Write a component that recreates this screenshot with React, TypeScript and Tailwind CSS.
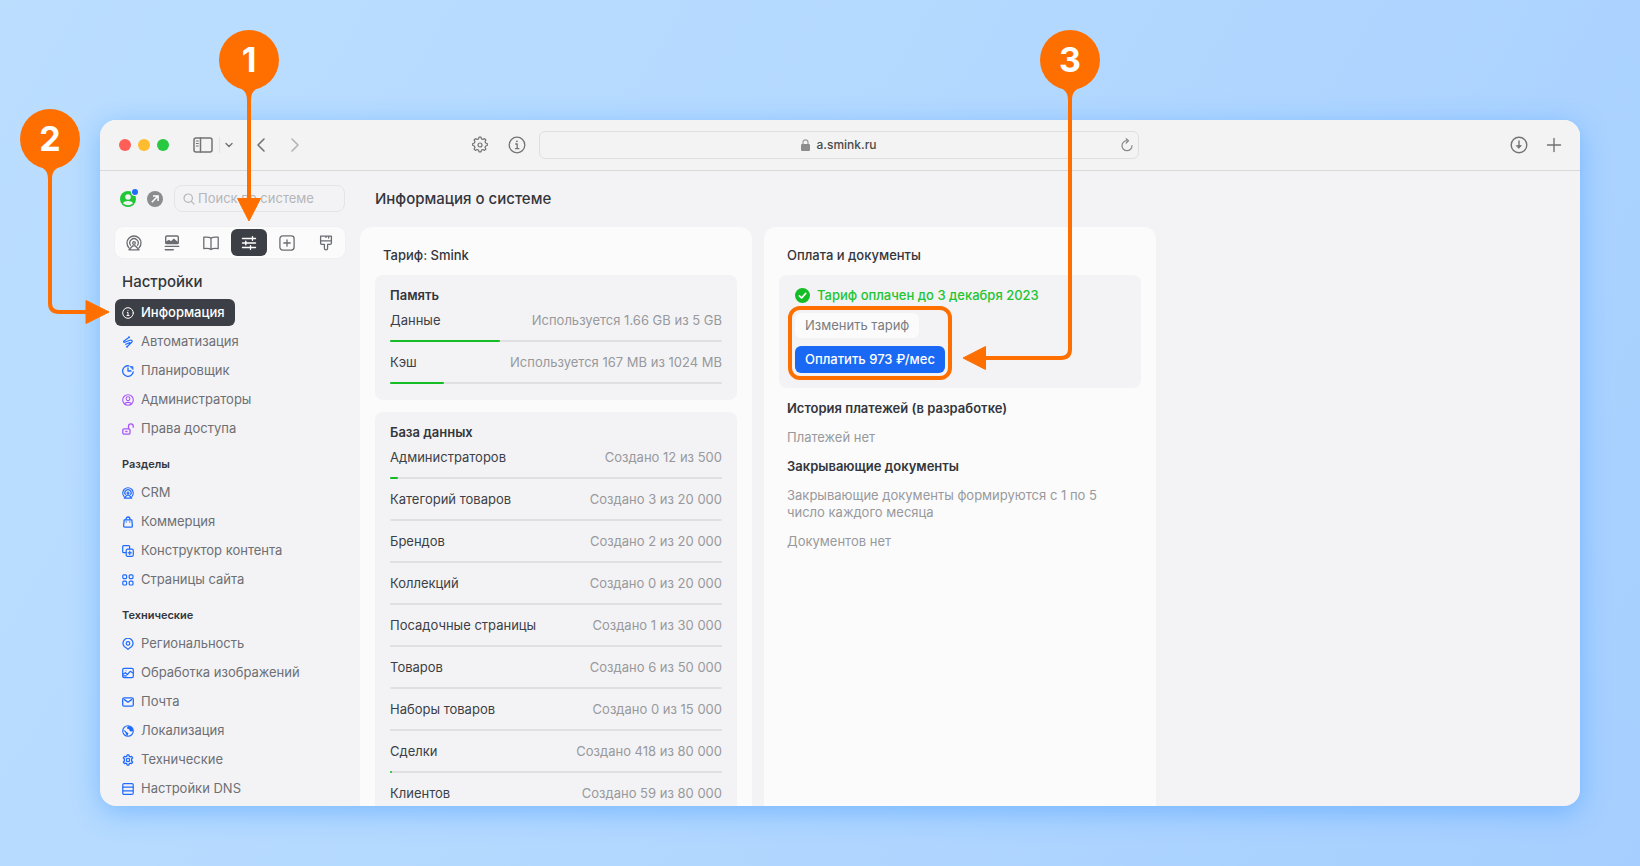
import type { ReactNode } from "react";

const FONT = "font-['Inter','Noto_Sans',sans-serif]";

/* ── Icons ── */

function Icon({ size = 12, box = 12, stroke = 1.2, className = "", children }: {
  size?: number;
  box?: number;
  stroke?: number;
  className?: string;
  children: ReactNode;
}) {
  return (
    <svg
      width={size}
      height={size}
      viewBox={`0 0 ${box} ${box}`}
      fill="none"
      stroke="currentColor"
      strokeWidth={stroke}
      strokeLinecap="round"
      strokeLinejoin="round"
      className={`shrink-0 ${className}`}
      aria-hidden="true"
    >
      {children}
    </svg>
  );
}

const crmShape = (
  <>
    <path d="M2.900 12.800A7 7 0 1 1 13.100 12.800" />
    <path d="M4.500 10.200a4.200 4.200 0 1 1 7 0" />
    <circle cx="8" cy="8" r="1.300" />
    <path d="M3 14.800 6.800 10.800h2.400l3.800 4z" />
  </>
);

const gearShape = (
  <path d="M6.8 1.2h2.4l.5 1.9 1.4.8 1.9-.6 1.2 2-1.4 1.4v2.6l1.4 1.4-1.2 2-1.9-.6-1.4.8-.5 1.9H6.8l-.5-1.9-1.4-.8-1.9.6-1.2-2 1.4-1.4V6.7L1.8 5.3l1.2-2 1.9.6 1.4-.8z" />
);

const icons: Record<string, ReactNode> = {
  info: (
    <Icon stroke={1}>
      <circle cx="6" cy="6" r="5.3" />
      <path d="M5.3 5.4H6v3M5 8.5h2.1" />
      <circle cx="6" cy="3.5" r=".5" fill="currentColor" stroke="none" />
    </Icon>
  ),
  auto: (
    <Icon stroke={1.2}>
      <path d="M6.200 2 2 5c-.8.7-.3 1.700.7 1.300L8 4.200c1.700-.6 3 .8 1.700 2.100L5.800 10M3.600 8.300 8 6.600" />
      <circle cx="7" cy="1.3" r="1" fill="currentColor" stroke="none" />
      <circle cx="5" cy="10.7" r="1" fill="currentColor" stroke="none" />
    </Icon>
  ),
  plan: (
    <Icon stroke={1.3}>
      <path d="M6.8.8A5.3 5.3 0 1 0 11.200 6.800" />
      <path d="M6 3v3h3" />
      <path d="M8.300 1.500 10.800 1.700 11 4.200z" fill="currentColor" stroke="currentColor" strokeWidth=".8" />
    </Icon>
  ),
  admin: (
    <Icon stroke={1.1}>
      <circle cx="6" cy="6" r="5.3" />
      <circle cx="6" cy="4.7" r="1.9" />
      <path d="M2.7 9.6c1-1.7 5.6-1.7 6.6 0" />
    </Icon>
  ),
  access: (
    <Icon stroke={1.3}>
      <rect x=".8" y="5.8" width="7.2" height="5.4" rx="1.3" />
      <path d="M6.5 5.6V3.2a2.3 2.3 0 0 1 4.7 0v1" />
      <path d="M3.8 8.5H5" />
    </Icon>
  ),
  crm: <Icon box={16} stroke={1.5}>{crmShape}</Icon>,
  shop: (
    <Icon stroke={1.3}>
      <path d="M2.2 3.8h7.6l.6 6.2c0 .8-.5 1.2-1.2 1.2H2.8c-.7 0-1.2-.4-1.2-1.2z" />
      <path d="M4 3.6C4 .1 8 .1 8 3.600M4.2 5.800v.2M7.8 5.800v.2" />
    </Icon>
  ),
  builder: (
    <Icon stroke={1.2}>
      <path d="M4 7.6H1.6a.9.9 0 0 1-.9-.9V1.6c0-.5.4-.9.9-.9h5.100c.5 0 .9.400.9.900V4" />
      <rect x="4.2" y="4.2" width="7.1" height="7.1" rx="1.2" />
      <path d="M7.75 6.2v3.2M6.15 7.8h3.2" />
    </Icon>
  ),
  pages: (
    <Icon stroke={1.2}>
      <rect x=".8" y=".8" width="3.8" height="3.8" rx="1" />
      <rect x="7.2" y=".8" width="3.8" height="3.8" rx="1" />
      <rect x=".8" y="7.2" width="3.8" height="3.8" rx="1" />
      <rect x="7.2" y="7.2" width="3.8" height="3.8" rx="1" />
    </Icon>
  ),
  region: (
    <Icon stroke={1.2}>
      <path d="M6 11.400 4.400 10A5 5 0 1 1 7.600 10z" />
      <circle cx="6" cy="5.4" r="1.800" />
    </Icon>
  ),
  images: (
    <Icon stroke={1.2}>
      <rect x=".7" y="1.3" width="10.6" height="9.4" rx="1.4" />
      <path d="m1 7.200 2.400-1.500 2 1.800 2.800-3.200L11 6M1 8.900h3.400" />
      <circle cx="4" cy="3.8" r=".5" fill="currentColor" stroke="none" />
    </Icon>
  ),
  mail: (
    <Icon stroke={1.3}>
      <rect x=".7" y="1.9" width="10.6" height="8.2" rx="1.4" />
      <path d="m2.4 3.6 3.6 2.600 3.600-2.600" />
    </Icon>
  ),
  locale: (
    <Icon stroke={1.1}>
      <circle cx="6" cy="6" r="5.3" />
      <path d="M6.2.9c-1 1-1.6 1.800-.8 2.800.8.8 2 .4 2 1.400 0 .9 1 1.700 2.200 1.400L11.200 6A5.300 5.300 0 0 0 6.200.9zM1 5l2.400.8 1.400 1.400c.6.600 1.600.600 1.600 1.400L5.400 11 4 9.200 3.400 7.600z" fill="currentColor" stroke="none" />
    </Icon>
  ),
  tech: (
    <Icon box={16} stroke={1.7}>
      {gearShape}
      <circle cx="8" cy="8" r="2.3" />
    </Icon>
  ),
  dns: (
    <Icon stroke={1.2}>
      <rect x=".8" y=".6" width="10.4" height="10.8" rx="1.2" />
      <path d="M1 4.200h10M1 7.800h10" />
    </Icon>
  ),
};

const tabs: { label: string; icon: ReactNode }[] = [
  { label: "CRM", icon: <Icon size={16} box={16} stroke={1.3}>{crmShape}</Icon> },
  {
    label: "Контент",
    icon: (
      <Icon size={16} box={16} stroke={1.4}>
        <rect x="1.7" y="1" width="12.6" height="7.6" rx="1.2" />
        <path d="M2 8.400V6.600l3-1.800 2 1.400 2.800-2.600L14 7v1.400z" fill="currentColor" stroke="none" />
        <path d="M1.300 11.400h13.400M1.300 14.700h8" />
      </Icon>
    ),
  },
  {
    label: "Справочник",
    icon: (
      <Icon size={16} box={16} stroke={1.3}>
        <path d="M8 3.200C6.600 1.900 3.600 1.900 .8 2.200v11.400c2.800-.3 5.800-.3 7.200 1 1.400-1.300 4.400-1.300 7.200-1V2.200C12.400 1.900 9.400 1.900 8 3.200zM8 3.200v11.400" />
      </Icon>
    ),
  },
  {
    label: "Настройки",
    icon: (
      <Icon size={16} box={16} stroke={1.4}>
        <path d="M1.500 3.500h13M1.500 8h13M1.500 12.500h13M11.500 1.700v3.600M4.800 6.200v3.600M9.500 10.700v3.600" />
      </Icon>
    ),
  },
  {
    label: "Добавить",
    icon: (
      <Icon size={16} box={16} stroke={1.3}>
        <rect x=".9" y=".9" width="14.2" height="14.2" rx="2.8" />
        <path d="M8 4.800v6.400M4.800 8h6.400" />
      </Icon>
    ),
  },
  {
    label: "Оформление",
    icon: (
      <Icon size={16} box={16} stroke={1.3}>
        <path d="M2.600 1.200h10.800V8c0 .8-.5 1.300-1.300 1.300H9.600v3.900c0 2.200-3.200 2.200-3.200 0V9.300H3.900c-.8 0-1.300-.5-1.300-1.300zM2.600 5.800h10.800M10.600 1.400V3M8 1.400v1" />
      </Icon>
    ),
  },
];

/* ── Data ── */

const navGroups = [
  {
    title: "Настройки",
    items: [
      { icon: "info", label: "Информация", active: true },
      { icon: "auto", label: "Автоматизация" },
      { icon: "plan", label: "Планировщик" },
      { icon: "admin", label: "Администраторы", purple: true },
      { icon: "access", label: "Права доступа", purple: true },
    ],
  },
  {
    title: "Разделы",
    items: [
      { icon: "crm", label: "CRM" },
      { icon: "shop", label: "Коммерция" },
      { icon: "builder", label: "Конструктор контента" },
      { icon: "pages", label: "Страницы сайта" },
    ],
  },
  {
    title: "Технические",
    items: [
      { icon: "region", label: "Региональность" },
      { icon: "images", label: "Обработка изображений" },
      { icon: "mail", label: "Почта" },
      { icon: "locale", label: "Локализация" },
      { icon: "tech", label: "Технические" },
      { icon: "dns", label: "Настройки DNS" },
    ],
  },
] as { title: string; items: { icon: string; label: string; active?: boolean; purple?: boolean }[] }[];

const memory = [
  { label: "Данные", text: "Используется 1.66 GB из 5 GB", part: 1.66 / 5 },
  { label: "Кэш", text: "Используется 167 MB из 1024 MB", part: 167 / 1024 },
];

const database = [
  { label: "Администраторов", text: "Создано 12 из 500", part: 12 / 500 },
  { label: "Категорий товаров", text: "Создано 3 из 20 000", part: 0 },
  { label: "Брендов", text: "Создано 2 из 20 000", part: 0 },
  { label: "Коллекций", text: "Создано 0 из 20 000", part: 0 },
  { label: "Посадочные страницы", text: "Создано 1 из 30 000", part: 0 },
  { label: "Товаров", text: "Создано 6 из 50 000", part: 0 },
  { label: "Наборы товаров", text: "Создано 0 из 15 000", part: 0 },
  { label: "Сделки", text: "Создано 418 из 80 000", part: 418 / 80000 },
  { label: "Клиентов", text: "Создано 59 из 80 000", part: 0 },
];

/* ── Browser toolbar ── */

function Toolbar() {
  return (
    <header className="grid h-[51px] shrink-0 grid-cols-[439px_minmax(0,600px)_1fr] items-center border-b border-[#d9d9dc] bg-[#f3f3f3] pb-px text-[#737373]">
      <div className="flex items-center pl-[19px]">
        <div className="flex gap-[7px]">
          <span className="size-3 rounded-full bg-[#ff5f57]" />
          <span className="size-3 rounded-full bg-[#febc2e]" />
          <span className="size-3 rounded-full bg-[#28c840]" />
        </div>
        <button type="button" aria-label="Боковая панель" className="ml-6">
          <Icon size={20} box={20} stroke={1.5}>
            <rect x="1" y="3" width="18" height="14" rx="2" />
            <path d="M7.500 3v14" />
            <path d="M3.300 6h2M3.300 8.500h2M3.300 11h2" strokeWidth="1" />
          </Icon>
        </button>
        <span className="ml-1.5 h-4 w-px bg-[#e4e4e4]" />
        <button type="button" aria-label="Группы вкладок" className="ml-[5px]">
          <Icon size={8} box={8} stroke={1.4}><path d="m1 2.500 3 3 3-3" /></Icon>
        </button>
        <button type="button" aria-label="Назад" className="ml-5">
          <Icon size={16} box={16} stroke={1.6}><path d="M11 2 5 8l6 6" /></Icon>
        </button>
        <button type="button" aria-label="Вперёд" className="ml-[18px] text-[#b3b3b3]">
          <Icon size={16} box={16} stroke={1.6}><path d="m5 2 6 6-6 6" /></Icon>
        </button>
        <button type="button" aria-label="Параметры" className="ml-auto">
          <Icon size={18} box={18} stroke={1.2}>
            <path d="M8 1.200h2l.5 1.700 1.400.6 1.600-.9 1.400 1.400-.9 1.600.6 1.400 1.700.5v2l-1.700.5-.6 1.400.9 1.600-1.400 1.400-1.600-.9-1.400.6-.5 1.700H8l-.5-1.700-1.400-.6-1.600.9L3.100 13l.9-1.600-.6-1.400-1.700-.5v-2L3.400 7 4 5.600 3.100 4l1.400-1.400 1.600.9 1.400-.6z" />
            <circle cx="9" cy="9" r="2" />
          </Icon>
        </button>
        <button type="button" aria-label="Сведения" className="ml-[19px] mr-[13px]">
          <Icon size={18} box={18} stroke={1.3}>
            <circle cx="9" cy="9" r="7.8" />
            <path d="M7.700 8H9.200v4.500M7.500 12.700h3.400" />
            <circle cx="8.9" cy="5.3" r=".9" fill="currentColor" stroke="none" />
          </Icon>
        </button>
      </div>

      <div className="relative flex h-7 items-center justify-center gap-1.5 rounded-md border border-[#dfdfdf] text-[12px] font-medium text-[#4a4a4a]">
        <svg width="9" height="12" viewBox="0 0 9 12" aria-hidden="true">
          <path d="M2 5.500V3.300a2.500 2.500 0 0 1 5 0v2.200" fill="none" stroke="#999" strokeWidth="1.2" />
          <rect y="5" width="9" height="7" rx="1.3" fill="#8c8c8c" />
        </svg>
        <span>a.smink.ru</span>
        <button type="button" aria-label="Обновить" className="absolute right-1 text-[#888]">
          <Icon size={14} box={14} stroke={1.2}>
            <path d="M7 2.700A5 5 0 1 0 12 7.700" />
            <path d="M6.200.7 8.500 2.800 6.200 5" />
          </Icon>
        </button>
      </div>

      <div className="flex items-center justify-end gap-[18px] pr-[18px]">
        <button type="button" aria-label="Загрузки">
          <Icon size={18} box={18} stroke={1.4}>
            <circle cx="9" cy="9" r="7.8" />
            <path d="M9 5v6" />
            <path d="M6.600 9.600h4.800L9 12.200z" fill="currentColor" strokeWidth=".8" />
          </Icon>
        </button>
        <button type="button" aria-label="Новая вкладка">
          <Icon size={16} box={16} stroke={1.4}><path d="M8 1.500v13M1.500 8h13" /></Icon>
        </button>
      </div>
    </header>
  );
}

/* ── Sidebar ── */

function Sidebar() {
  return (
    <aside className="w-[245px] shrink-0 pl-[15px] pt-[14px]">
      <div className="flex h-[27px] items-center">
        <button type="button" aria-label="Профиль" className="relative ml-[5px]">
          <svg width="16" height="16" viewBox="0 0 16 16" aria-hidden="true">
            <circle cx="8" cy="8" r="8" fill="#1fc736" />
            <circle cx="8" cy="6" r="2.8" fill="#f3f3f5" />
            <path d="M3 12.200c1-3 9-3 10 0-2.600 2.600-7.400 2.600-10 0z" fill="#f3f3f5" />
          </svg>
          <span className="absolute -right-0.5 -top-0.5 size-[6px] rounded-full bg-[#1f6bff] ring-1 ring-[#f3f3f5]" />
        </button>
        <button type="button" aria-label="Открыть сайт" className="ml-[11px]">
          <svg width="16" height="16" viewBox="0 0 16 16" aria-hidden="true">
            <circle cx="8" cy="8" r="8" fill="#8b8c90" />
            <path d="M4.800 11.200 11 5M6 4.900h5.100V10" fill="none" stroke="#fff" strokeWidth="1.5" />
          </svg>
        </button>
        <label className="ml-[11px] flex h-[27px] w-[171px] items-center gap-[3px] rounded-lg border border-[#e4e4e7] pl-2 text-[#b5b6b9]">
          <Icon size={12} stroke={1.2}>
            <circle cx="5.2" cy="5.2" r="4.2" />
            <path d="m8.400 8.400 2.700 2.700" />
          </Icon>
          <input
            type="search"
            aria-label="Поиск по системе"
            placeholder="Поиск по системе"
            className="w-full min-w-0 bg-transparent text-[13px] outline-none placeholder:text-[#b5b6b9]"
          />
        </label>
      </div>

      <div className="mt-[15px] flex h-[31px] w-[230px] gap-0.5 rounded-lg bg-[#fbfbfb] px-px py-0.5 shadow-[0_0_2px_rgba(0,0,0,0.06)]">
        {tabs.map((tab) => (
          <button
            key={tab.label}
            type="button"
            aria-label={tab.label}
            className={`flex flex-1 items-center justify-center rounded-md ${tab.label === "Настройки" ? "bg-[#3c4046] text-white" : "text-[#6b6d72]"}`}
          >
            {tab.icon}
          </button>
        ))}
      </div>

      <nav>
        {navGroups.map((group, i) => (
          <section key={group.title}>
            <h2
              className={
                i === 0
                  ? "mb-1.5 ml-[7px] mt-[13px] text-[15px] font-medium leading-[22px] text-[#33363c]"
                  : "mb-[7px] ml-[7px] mt-[14px] text-[11px] font-semibold leading-4 text-[#33363c]"
              }
            >
              {group.title}
            </h2>
            <ul className="flex flex-col items-start gap-0.5">
              {group.items.map((item) => (
                <li key={item.label}>
                  <a
                    href="#"
                    className={`flex h-[27px] items-center gap-[7px] rounded-md pl-[7px] pr-[10px] text-[13px] ${item.active ? "bg-[#3c4046] font-medium text-white" : "text-[#6d6f74]"}`}
                  >
                    <span className={item.active ? "text-white" : item.purple ? "text-[#a855f7]" : "text-[#1f6bff]"}>
                      {icons[item.icon]}
                    </span>
                    {item.label}
                  </a>
                </li>
              ))}
            </ul>
          </section>
        ))}
      </nav>
    </aside>
  );
}

/* ── Content ── */

function Usage({ title, rows }: { title: string; rows: typeof memory }) {
  return (
    <section className="rounded-lg bg-[#f3f3f5] px-[15px] pb-4 pt-[11px]">
      <h3 className="mb-1 text-[13px] font-semibold leading-[18px] text-[#33363c]">{title}</h3>
      <ul className="flex flex-col gap-2">
        {rows.map((row) => (
          <li key={row.label}>
            <div className="flex h-8 justify-between pt-[3px] text-[13px] leading-[18px]">
              <span className="text-[#3c3f45]">{row.label}</span>
              <span className="text-[#98999c]">{row.text}</span>
            </div>
            <div className="h-0.5 rounded-full bg-[#e0e0e2]">
              <div className="h-0.5 rounded-full bg-[#14bd25]" style={{ width: `${row.part * 100}%` }} />
            </div>
          </li>
        ))}
      </ul>
    </section>
  );
}

function Content() {
  return (
    <main className="min-w-0 flex-1 pl-[15px] pr-4 pt-[14px]">
      <h1 className="ml-[15px] text-[15px] font-medium leading-[27px] text-[#33363c]">Информация о системе</h1>
      <div className="mt-[15px] grid grid-cols-[repeat(auto-fill,minmax(392px,392px))] gap-3">
        <section className="rounded-t-xl bg-[#fbfbfb] px-[15px] pt-[19px]">
          <h2 className="mb-2.5 ml-2 text-[13px] font-medium leading-[19px] text-[#33363c]">Тариф: Smink</h2>
          <div className="flex flex-col gap-3">
            <Usage title="Память" rows={memory} />
            <Usage title="База данных" rows={database} />
          </div>
        </section>

        <section className="rounded-t-xl bg-[#fbfbfb] px-[15px] pt-[19px] text-[13px]">
          <h2 className="mb-2.5 ml-2 font-medium leading-[19px] text-[#33363c]">Оплата и документы</h2>
          <div className="flex flex-col items-start rounded-lg bg-[#f3f3f5] px-4 pb-[15px] pt-[11px]">
            <p className="flex items-center gap-[7px] font-medium leading-[18px] text-[#22c432]">
              <svg width="15" height="15" viewBox="0 0 15 15" aria-hidden="true">
                <circle cx="7.5" cy="7.5" r="7.5" fill="#14bd25" />
                <path d="m4.400 7.800 2.200 2.200 4.100-4.600" fill="none" stroke="#fff" strokeWidth="1.7" strokeLinecap="round" strokeLinejoin="round" />
              </svg>
              Тариф оплачен до 3 декабря 2023
            </p>
            <div className="relative mt-[9px] flex flex-col items-start gap-2">
              <button type="button" className="h-[25px] rounded-md bg-[#fbfbfb] px-2.5 text-[#7a7b7f]">Изменить тариф</button>
              <button type="button" className="h-[27px] rounded-md bg-[#1a69f4] px-2.5 font-medium text-white">Оплатить 973 ₽/мес</button>
              <span className="pointer-events-none absolute -inset-[7px] rounded-xl border-4 border-[#ff6f00]" />
            </div>
          </div>
          <div className="mx-2 mt-3 flex flex-col gap-3 leading-[17px] text-[#98999c]">
            <h3 className="font-semibold text-[#33363c]">История платежей (в разработке)</h3>
            <p>Платежей нет</p>
            <h3 className="font-semibold text-[#33363c]">Закрывающие документы</h3>
            <p>Закрывающие документы формируются с 1 по 5 число каждого месяца</p>
            <p>Документов нет</p>
          </div>
        </section>
      </div>
    </main>
  );
}

/* ── Numbered callouts ── */

function Callout({ label, className, width, height, pinX, line, head }: {
  label: string;
  className: string;
  width: number;
  height: number;
  pinX: number;
  line: string;
  head: string;
}) {
  const x = pinX;
  return (
    <div className={`pointer-events-none absolute ${className}`}>
      <svg width={width} height={height} viewBox={`0 0 ${width} ${height}`} aria-hidden="true">
        <circle cx={x} cy="30" r="30" fill="#ff6f00" />
        <path d={`M${x - 13} 56 C${x - 5} 59 ${x - 2} 63 ${x - 2} 70 H${x + 2} C${x + 2} 63 ${x + 5} 59 ${x + 13} 56z`} fill="#ff6f00" />
        <path d={line} fill="none" stroke="#ff6f00" strokeWidth="4" />
        <path d={head} fill="#ff6f00" stroke="#ff6f00" strokeWidth="1" strokeLinejoin="round" />
      </svg>
      <span className={`absolute top-0 flex h-[58px] w-[60px] items-center justify-center text-[34px] font-bold text-white ${x > 30 ? "right-0" : "left-0"}`}>
        {label}
      </span>
    </div>
  );
}

export default function App() {
  return (
    <div className={`relative h-screen overflow-hidden bg-[linear-gradient(120deg,#bbdeff_0%,#b4d9ff_45%,#a6cfff_100%)] pb-[60px] pl-[100px] pr-[60px] pt-[120px] ${FONT}`}>
      <div className="flex h-full flex-col overflow-hidden rounded-2xl bg-[#f3f3f5] shadow-[0_6px_28px_rgba(30,135,255,0.38)]">
        <Toolbar />
        <div className="flex min-h-0 flex-1">
          <Sidebar />
          <Content />
        </div>
      </div>

      <Callout
        label="1"
        className="left-[219px] top-[30px]"
        width={60}
        height={192}
        pinX={30}
        line="M30 60V170"
        head="M18.500 168.500H41.500L30 191z"
      />
      <Callout
        label="2"
        className="left-[20px] top-[109px]"
        width={90}
        height={216}
        pinX={30}
        line="M30 60V194Q30 203 39 203H68"
        head="M66 191.500V214.500L89 203z"
      />
      <Callout
        label="3"
        className="left-[962px] top-[30px]"
        width={138}
        height={341}
        pinX={108}
        line="M108 60V319Q108 328 99 328H22"
        head="M23.500 316.500V339.500L1 328z"
      />
    </div>
  );
}
